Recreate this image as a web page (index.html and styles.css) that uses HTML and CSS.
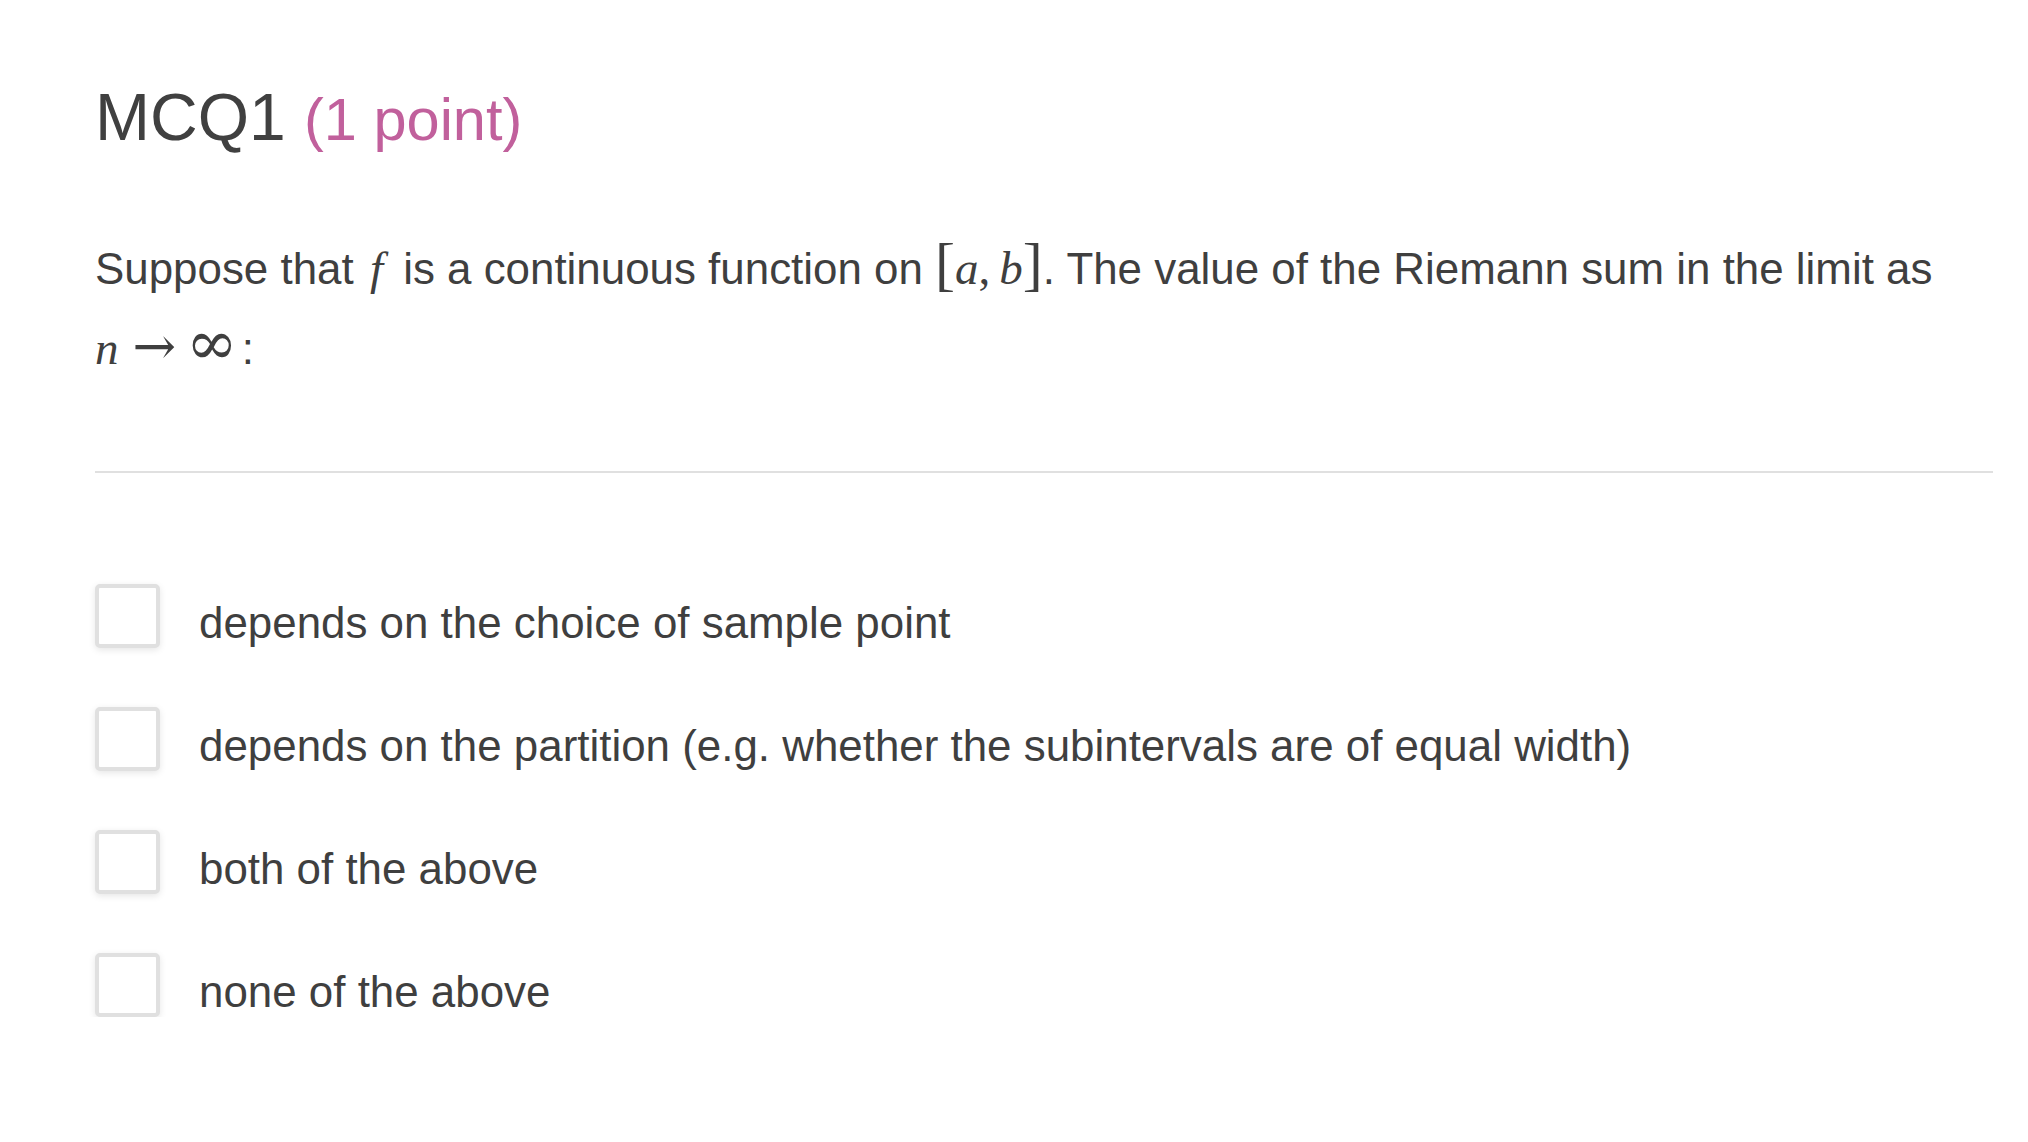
FILE: index.html
```html
<!DOCTYPE html>
<html lang="en">
<head>
<meta charset="utf-8">
<title>MCQ1</title>
<link rel="stylesheet" href="styles.css">
</head>
<body>
<main class="question">
  <h1 class="q-title">MCQ1 <span class="q-points">(1 point)</span></h1>
  <p class="q-text">Suppose that <span class="math"><i class="mi mi-f">f</i></span> is a continuous function on <span class="math"><span class="mo br">[</span><i class="mi">a</i><span class="mo comma">,</span><i class="mi">b</i><span class="mo br">]</span></span>. The value of the Riemann sum in the limit as <span class="nowrap"><span class="math"><i class="mi">n</i><span class="mo arrow">&#8594;</span><span class="mo inf">&#8734;</span></span>:</span></p>
  <hr class="q-rule">
  <ul class="options">
    <li class="option"><span class="checkbox"></span><span class="opt-label">depends on the choice of sample point</span></li>
    <li class="option"><span class="checkbox"></span><span class="opt-label">depends on the partition (e.g. whether the subintervals are of equal width)</span></li>
    <li class="option"><span class="checkbox"></span><span class="opt-label">both of the above</span></li>
    <li class="option"><span class="checkbox"></span><span class="opt-label">none of the above</span></li>
  </ul>
</main>
</body>
</html>
```
FILE: styles.css
```css
html, body {
  margin: 0;
  padding: 0;
  background: #ffffff;
}

body {
  font-family: "Liberation Sans", Arial, sans-serif;
  color: #3f3f3f;
}

.question {
  padding: 77px 35px 0 95px;
}

.q-title {
  margin: 0;
  font-size: 66px;
  font-weight: normal;
  line-height: 80px;
  color: #404040;
}

.q-points {
  font-size: 59.5px;
  color: #c1609c;
}

.q-text {
  margin: 69px 0 0 0;
  font-size: 43.9px;
  line-height: 80px;
}

.nowrap {
  white-space: nowrap;
}

.math {
  font-family: "Liberation Serif", "Times New Roman", serif;
  font-size: 47px;
  line-height: 0;
  white-space: nowrap;
}

.mi {
  font-style: italic;
}

.mi-f {
  padding: 0 8px 0 4px;
}

.mo {
  font-style: normal;
}

.br {
  font-size: 60px;
  line-height: 0;
}

.comma {
  padding-right: 9px;
}

.arrow {
  font-family: "DejaVu Serif", serif;
  font-size: 52px;
  padding: 0 10px 0 14px;
}

.inf {
  font-family: "DejaVu Serif", serif;
  font-size: 62px;
  font-weight: 300;
  line-height: 0;
  padding-right: 4px;
}

.q-rule {
  margin: 82px 0 0 0;
  border: 0;
  height: 2px;
  background: #e0e0e0;
}

.options {
  list-style: none;
  margin: 111px 0 0 0;
  padding: 0;
  display: flex;
  flex-direction: column;
  gap: 59px;
}

.option {
  display: flex;
  align-items: flex-start;
  gap: 39px;
  height: 64px;
}

.checkbox {
  flex: none;
  box-sizing: border-box;
  width: 65px;
  height: 64px;
  border: 4px solid #e0e0e0;
  border-radius: 5px;
  background: #ffffff;
  box-shadow: 0 2px 7px rgba(0, 0, 0, 0.10);
}

.opt-label {
  font-size: 43.9px;
  line-height: 64px;
  padding-top: 7px;
  color: #3f3f3f;
}
```
